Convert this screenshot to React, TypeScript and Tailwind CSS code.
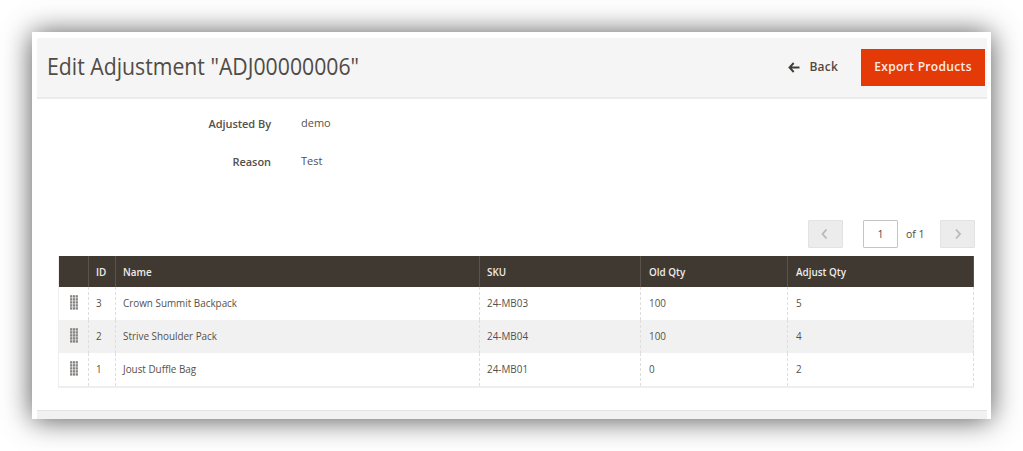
import React from 'react';

const rows = [
  { id: 3, name: 'Crown Summit Backpack', sku: '24-MB03', old: 100, qty: 5 },
  { id: 2, name: 'Strive Shoulder Pack', sku: '24-MB04', old: 100, qty: 4 },
  { id: 1, name: 'Joust Duffle Bag', sku: '24-MB01', old: 0, qty: 2 },
];

function Grip() {
  return (
    <svg width="8" height="15" viewBox="0 0 8 15" fill="#85827f">
      {[0, 1, 2, 3, 4].map((r) =>
        [0, 1, 2].map((c) => (
          <rect key={`${r}-${c}`} x={0.1 + c * 2.8} y={0.2 + r * 3} width="2.2" height="2.4" />
        )),
      )}
    </svg>
  );
}

function Chevron({ flip = false }: { flip?: boolean }) {
  return (
    <svg width="8" height="12" viewBox="0 0 8 12" fill="none" stroke="#b8b8b8" strokeWidth="1.8">
      <path d={flip ? 'M2 1.5 6 6 2 10.5' : 'M5.5 1.5 1.5 6 5.5 10.5'} />
    </svg>
  );
}

const cell = 'border-r border-dashed border-[#dedede] px-[7px] py-0 text-left align-middle';
const cellWide = 'border-r border-dashed border-[#dedede] px-2 py-0 text-left align-middle';
const head = 'border-r border-[#5b544d] px-[7px] pt-0.5 pb-0 text-left align-middle font-semibold';
const headWide = 'border-r border-[#5b544d] px-2 pt-0.5 pb-0 text-left align-middle font-semibold';

export default function App() {
  return (
    <div className="h-[451px] w-[1023px] overflow-hidden bg-white pt-8 pl-8 font-['Open_Sans',sans-serif] text-[#41362f]">
      <main className="flex h-[387px] w-[959px] flex-col bg-white pt-1.5 pr-1 pl-[5px] shadow-[0_1px_27px_rgba(0,0,0,0.68)]">
        <header className="flex h-[61px] shrink-0 items-center border-b-2 border-[#ebebeb] bg-[#f5f5f5] pr-0.5 pb-px pl-2.5">
          <h1 className="mb-0.5 origin-left scale-x-[0.885] text-[24px] leading-8 whitespace-nowrap text-[#514b46]">Edit Adjustment "ADJ00000006"</h1>
          <button className="ml-auto flex items-center gap-[9px] text-[12px] font-semibold tracking-[0.2px] text-[#514943]">
            <svg width="12" height="11" viewBox="0 0 12 11" fill="none" stroke="#413d39" strokeWidth="1.9">
              <path d="M5.7 1 1.5 5.5 5.7 10M1.7 5.5h9.8" />
            </svg>
            Back
          </button>
          <button className="ml-[23px] h-[37px] w-[124px] bg-[#e33a08] text-[12px] font-semibold tracking-[0.33px] whitespace-nowrap text-[#ffede5]">
            Export Products
          </button>
        </header>

        <dl className="grid h-[78px] shrink-0 grid-cols-[234px_1fr] gap-x-[30px] pt-[5px] text-[11px] text-[#55504b]">
          <dt className="flex h-[38px] items-center justify-end pt-0.5 font-semibold tracking-[-0.05px]">Adjusted By</dt>
          <dd className="flex h-[38px] items-center">demo</dd>
          <dt className="flex h-[38px] items-center justify-end pt-0.5 font-semibold tracking-[-0.05px]">Reason</dt>
          <dd className="flex h-[38px] items-center">Test</dd>
        </dl>

        <nav className="mt-[43px] mr-3 flex h-7 shrink-0 items-center justify-end text-[10.5px] text-[#514943]">
          <button className="flex h-7 w-[35px] items-center justify-center rounded-[1px] border border-[#e2e2e2] bg-[#ececec] pr-0.5"><Chevron /></button>
          <span className="ml-5 flex h-7 w-[35px] items-center justify-center rounded-[1px] border border-[#c4c4c4] bg-white pt-px">1</span>
          <span className="mr-[15px] ml-[8px] w-[19px] pt-px whitespace-nowrap">of 1</span>
          <button className="flex h-7 w-[35px] items-center justify-center rounded-[1px] border border-[#e2e2e2] bg-[#ececec]"><Chevron flip /></button>
        </nav>

        <table className="mt-2 ml-[21px] w-[916px] table-fixed border-separate border-spacing-0 border-b-2 border-l border-[#eeeeee] text-[9.9px] text-[#55504b]">
          <colgroup>
            <col className="w-[30px]" />
            <col className="w-[27px]" />
            <col className="w-[364px]" />
            <col className="w-[161px]" />
            <col className="w-[147px]" />
            <col />
          </colgroup>
          <thead>
            <tr className="h-[31px] bg-[#3f3932] text-[#f0ece8]">
              <th className={head} />
              <th className={head}>ID</th>
              <th className={head}>Name</th>
              <th className={head}>SKU</th>
              <th className={headWide}>Old Qty</th>
              <th className={headWide}>Adjust Qty</th>
            </tr>
          </thead>
          <tbody>
            {rows.map((r) => (
              <tr key={r.id} className="h-[33px] even:bg-[#f1f1f1]">
                <td className={cell}><div className="mb-0.5 ml-[4px] w-2"><Grip /></div></td>
                <td className={cell}>{r.id}</td>
                <td className={cell}>{r.name}</td>
                <td className={cell}>{r.sku}</td>
                <td className={cellWide}>{r.old}</td>
                <td className={cellWide}>{r.qty}</td>
              </tr>
            ))}
          </tbody>
        </table>
        <footer className="mt-auto h-[9px] shrink-0 border-t border-[#e3e3e3] bg-[#f1f1f1]" />
      </main>
    </div>
  );
}
